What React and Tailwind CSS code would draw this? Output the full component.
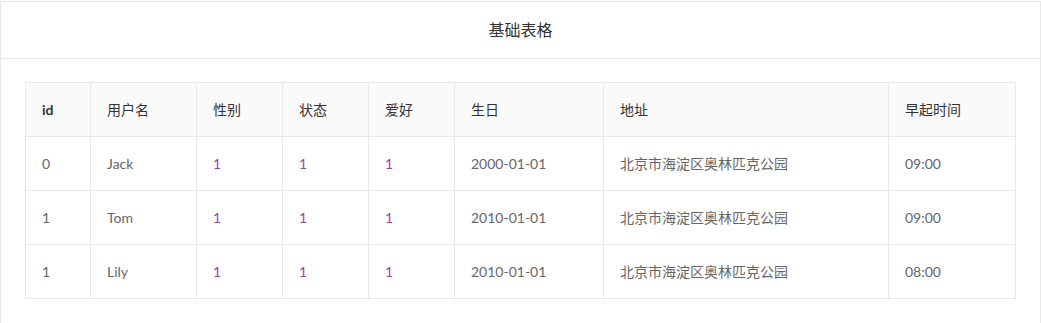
import React from "react";

const cols = [
  { key: "id", title: "id", w: 65 },
  { key: "name", title: "用户名", w: 106 },
  { key: "sex", title: "性别", w: 86 },
  { key: "state", title: "状态", w: 86 },
  { key: "hobby", title: "爱好", w: 86 },
  { key: "birth", title: "生日", w: 149 },
  { key: "addr", title: "地址", w: 285 },
  { key: "time", title: "早起时间", w: 127 },
];

const rows = [
  { id: "0", name: "Jack", sex: "1", state: "1", hobby: "1", birth: "2000-01-01", addr: "北京市海淀区奥林匹克公园", time: "09:00" },
  { id: "1", name: "Tom", sex: "1", state: "1", hobby: "1", birth: "2010-01-01", addr: "北京市海淀区奥林匹克公园", time: "09:00" },
  { id: "1", name: "Lily", sex: "1", state: "1", hobby: "1", birth: "2010-01-01", addr: "北京市海淀区奥林匹克公园", time: "08:00" },
];

const purple = new Set(["sex", "state", "hobby"]);

export default function App() {
  return (
    <div
      className="w-[1041px] h-[323px] overflow-hidden bg-white pt-px"
      style={{ fontFamily: '"Lato", "Noto Sans CJK SC", sans-serif' }}
    >
      <div className="border border-[#e8e8e8] h-[400px]">
        <div className="h-[57px] border-b border-[#e8e8e8] flex items-center justify-center text-[16px] text-[#333]">
          基础表格
        </div>
        <div className="px-6 pt-[23px]">
          <table className="border-collapse w-[990px] text-[14px] table-fixed">
            <colgroup>
              {cols.map((c) => (
                <col key={c.key} style={{ width: c.w }} />
              ))}
            </colgroup>
            <thead>
              <tr className="h-[54px] bg-[#fafafa]">
                {cols.map((c) => (
                  <th
                    key={c.key}
                    className={`border border-[#e8e8e8] px-4 text-left text-[#333] ${c.key === "id" ? "font-bold" : "font-normal"}`}
                  >
                    {c.title}
                  </th>
                ))}
              </tr>
            </thead>
            <tbody>
              {rows.map((r, i) => (
                <tr key={i} className="h-[54px]">
                  {cols.map((c) => (
                    <td
                      key={c.key}
                      className={`border border-[#e8e8e8] px-4 ${purple.has(c.key) ? "text-[#a23ea8]" : "text-[#666]"}`}
                    >
                      {r[c.key]}
                    </td>
                  ))}
                </tr>
              ))}
            </tbody>
          </table>
        </div>
      </div>
    </div>
  );
}
